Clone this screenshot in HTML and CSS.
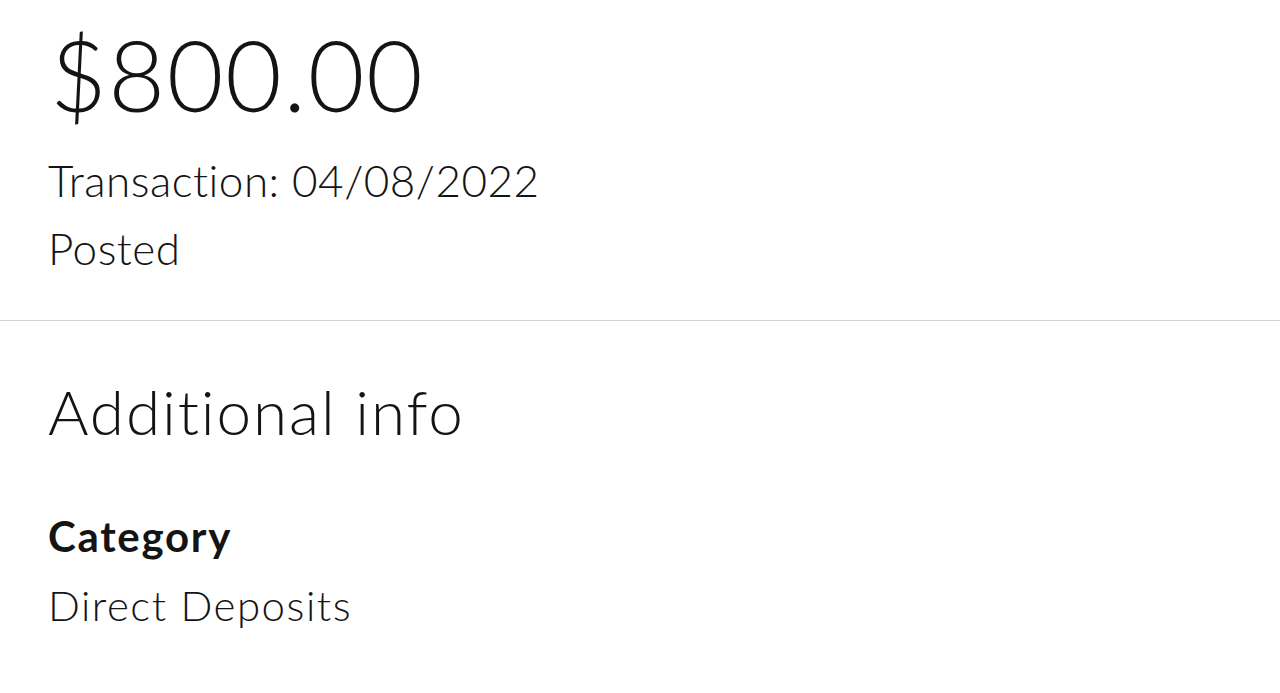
FILE: index.html
```html
<!DOCTYPE html>
<html>
<head>
<meta charset="utf-8">
<link rel="stylesheet" href="styles.css">
</head>
<body>
<section class="summary">
  <div class="amount">$800.00</div>
  <div class="meta">Transaction: 04/08/2022</div>
  <div class="meta">Posted</div>
</section>
<hr class="divider">
<section class="info">
  <h2 class="info-title">Additional info</h2>
  <div class="field">
    <div class="field-label">Category</div>
    <div class="field-value">Direct Deposits</div>
  </div>
</section>
</body>
</html>
```
FILE: styles.css
```css
html, body {
  margin: 0;
  padding: 0;
  background: #ffffff;
}
body {
  font-family: Lato, "Open Sans", sans-serif;
  font-variant-ligatures: none;
  color: #141414;
  width: 1280px;
  height: 693px;
  overflow: hidden;
}
.summary {
  padding: 15px 48px 38px;
}
.amount {
  font-size: 98px;
  font-weight: 300;
  line-height: 118px;
  letter-spacing: 1.5px;
  margin-bottom: 13px;
  padding-left: 2px;
}
.meta {
  font-size: 44px;
  font-weight: 300;
  line-height: 68px;
  letter-spacing: 0.5px;
}
.divider {
  margin: 0;
  border: 0;
  height: 1px;
  background: #d2d2d2;
}
.info {
  padding: 53px 48px 0;
}
.info-title {
  margin: 0 0 54px;
  font-size: 62px;
  font-weight: 300;
  line-height: 74px;
  letter-spacing: 1.9px;
}
.field-label {
  font-size: 42px;
  font-weight: 700;
  line-height: 69px;
  letter-spacing: 1.7px;
}
.field-value {
  font-size: 42px;
  font-weight: 300;
  line-height: 69px;
  letter-spacing: 1.5px;
}
```
